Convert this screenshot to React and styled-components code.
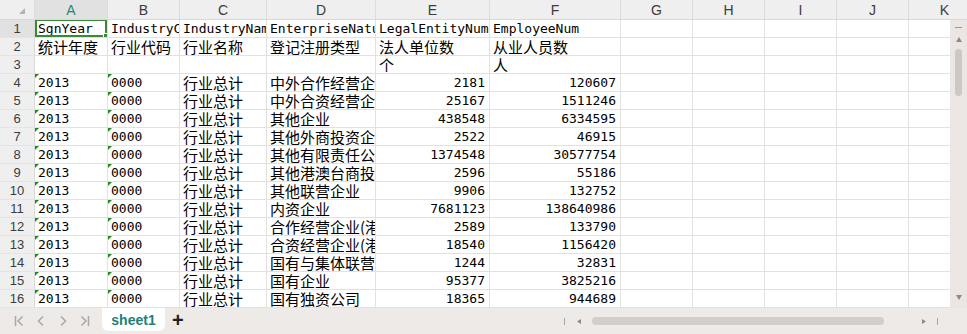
import styled, { createGlobalStyle } from "styled-components";

const COLS = [
    { key: "A", width: 73 },
    { key: "B", width: 72 },
    { key: "C", width: 87 },
    { key: "D", width: 109 },
    { key: "E", width: 114 },
    { key: "F", width: 131 },
    { key: "G", width: 72 },
    { key: "H", width: 72 },
    { key: "I", width: 72 },
    { key: "J", width: 72 },
    { key: "K", width: 72 },
];

const body = [
    ["中外合作经营企业", "2181", "120607"],
    ["中外合资经营企业", "25167", "1511246"],
    ["其他企业", "438548", "6334595"],
    ["其他外商投资企业", "2522", "46915"],
    ["其他有限责任公司", "1374548", "30577754"],
    ["其他港澳台商投资企业", "2596", "55186"],
    ["其他联营企业", "9906", "132752"],
    ["内资企业", "7681123", "138640986"],
    ["合作经营企业(港澳台)", "2589", "133790"],
    ["合资经营企业(港澳台)", "18540", "1156420"],
    ["国有与集体联营企业", "1244", "32831"],
    ["国有企业", "95377", "3825216"],
    ["国有独资公司", "18365", "944689"],
];

const rows = [
    ["SgnYear", "IndustryCode", "IndustryName", "EnterpriseNature", "LegalEntityNum", "EmployeeNum"],
    ["统计年度", "行业代码", "行业名称", "登记注册类型", "法人单位数", "从业人员数"],
    ["", "", "", "", "个", "人"],
    ...body.map(([type, legal, emp]) => ["2013", "0000", "行业总计", type, legal, emp]),
];

const isNumber = (v) => /^\d+$/.test(v);

export default function App() {
    return (
        <Page>
            <GlobalStyle />
            <HeaderRow>
                <Corner><CornerMark /></Corner>
                {COLS.map((c) => (
                    <ColHead key={c.key} $w={c.width} $active={c.key === "A"}>{c.key}</ColHead>
                ))}
            </HeaderRow>
            <Body>
                <Grid>
                    {rows.map((cells, r) => (
                        <Row key={r}>
                            <RowHead $active={r === 0}>{r + 1}</RowHead>
                            {COLS.map((c, i) => {
                                const v = cells[i] || "";
                                const flagged = r >= 3 && i < 2;
                                const right = r >= 3 && isNumber(v) && i >= 4;
                                return (
                                    <Cell
                                        key={c.key}
                                        $w={c.width}
                                        $mono={/^[\x00-\x7f]*$/.test(v)}
                                        $right={right}
                                        $flag={flagged}
                                    >
                                        {v}
                                        {r === 0 && i === 0 && <Selection><Handle /></Selection>}
                                    </Cell>
                                );
                            })}
                        </Row>
                    ))}
                </Grid>
                <VScroll>
                    <Dash />
                    <Arrow viewBox="0 0 6 5"><path d="M3 0 L6 5 L0 5 Z" /></Arrow>
                    <VThumb />
                    <Spacer />
                    <Arrow viewBox="0 0 6 5"><path d="M0 0 L6 0 L3 5 Z" /></Arrow>
                </VScroll>
            </Body>
            <Footer>
                <Nav>
                    <NavIcon viewBox="0 0 10 12"><path d="M1.5 1 V11 M8.5 1.5 L4 6 L8.5 10.5" /></NavIcon>
                    <NavIcon viewBox="0 0 10 12"><path d="M7 1.5 L2.5 6 L7 10.5" /></NavIcon>
                    <NavIcon viewBox="0 0 10 12"><path d="M3 1.5 L7.5 6 L3 10.5" /></NavIcon>
                    <NavIcon viewBox="0 0 10 12"><path d="M1.5 1.5 L6 6 L1.5 10.5 M8.5 1 V11" /></NavIcon>
                </Nav>
                <SheetTab>sheet1</SheetTab>
                <AddSheet>+</AddSheet>
                <HScroll>
                    <Tick />
                    <SmallArrow viewBox="0 0 5 6"><path d="M0 3 L5 0 L5 6 Z" /></SmallArrow>
                    <HThumb />
                    <SmallArrow viewBox="0 0 5 6"><path d="M5 3 L0 0 L0 6 Z" /></SmallArrow>
                    <Tick />
                </HScroll>
            </Footer>
        </Page>
    );
}

const GlobalStyle = createGlobalStyle`
    body {
        margin: 0;
        overflow: hidden;
        background: #fff;
    }
    * {
        box-sizing: border-box;
    }
`;

const Page = styled.div`
    width: 967px;
    height: 334px;
    display: flex;
    flex-direction: column;
    overflow: hidden;
    font-family: "Liberation Sans", Arial, sans-serif;
`;

const HeaderRow = styled.div`
    display: flex;
    height: 20px;
    background: #efefef;
    border-bottom: 1px solid #d9d9d9;
    flex-shrink: 0;
`;

const Corner = styled.div`
    width: 35px;
    flex-shrink: 0;
    position: relative;
    border-right: 1px solid #dcdcdc;
`;

const CornerMark = styled.div`
    position: absolute;
    right: 9px;
    bottom: 5px;
    width: 0;
    height: 0;
    border-left: 6px solid transparent;
    border-bottom: 6px solid #b4b4b4;
`;

const ColHead = styled.div`
    width: ${({ $w }) => $w}px;
    flex-shrink: 0;
    display: flex;
    align-items: center;
    justify-content: center;
    font-size: 14px;
    color: ${({ $active }) => ($active ? "#1d8a78" : "#3c3c3c")};
    background: ${({ $active }) => ($active ? "#e1e1e1" : "transparent")};
    border-right: 1px solid #dcdcdc;
`;

const Body = styled.div`
    flex: 1;
    display: flex;
    min-height: 0;
`;

const Grid = styled.div`
    flex: 1;
    overflow: hidden;
    display: flex;
    flex-direction: column;
`;

const Row = styled.div`
    display: flex;
    height: 18px;
    flex-shrink: 0;
`;

const RowHead = styled.div`
    width: 35px;
    flex-shrink: 0;
    display: flex;
    align-items: center;
    justify-content: center;
    font-size: 13px;
    color: #3c3c3c;
    background: ${({ $active }) => ($active ? "#e1e1e1" : "#efefef")};
    border-right: 1px solid #d9d9d9;
    border-bottom: 1px solid #e4e4e4;
`;

const Cell = styled.div`
    position: relative;
    width: ${({ $w }) => $w}px;
    flex-shrink: 0;
    padding: ${({ $mono }) => ($mono ? "0" : "1px")} ${({ $right }) => ($right ? "4px" : "0")} 0
        ${({ $right }) => ($right ? "0" : "3px")};
    display: flex;
    align-items: ${({ $mono }) => ($mono ? "flex-end" : "flex-start")};
    justify-content: ${({ $right }) => ($right ? "flex-end" : "flex-start")};
    white-space: nowrap;
    overflow: hidden;
    border-right: 1px solid #e1e1e1;
    border-bottom: 1px solid #e1e1e1;
    color: #000;
    font-family: ${({ $mono }) =>
        $mono ? `"DejaVu Sans Mono", "Liberation Mono", monospace` : `"Noto Sans CJK SC", sans-serif`};
    font-size: ${({ $mono }) => ($mono ? "13px" : "15px")};
    line-height: ${({ $mono }) => ($mono ? "16px" : "15px")};

    &::before {
        content: "";
        display: ${({ $flag }) => ($flag ? "block" : "none")};
        position: absolute;
        left: 0;
        top: 0;
        border-top: 4px solid #1c8c1c;
        border-right: 4px solid transparent;
    }
`;

const Selection = styled.div`
    position: absolute;
    inset: -1px 0 0 0;
    border: 2px solid #3a8a35;
    pointer-events: none;
`;

const Handle = styled.div`
    position: absolute;
    right: -4px;
    bottom: -4px;
    width: 6px;
    height: 6px;
    background: #3a8a35;
    border: 1px solid #fff;
`;

const VScroll = styled.div`
    width: 17px;
    flex-shrink: 0;
    background: #ebe6e4;
    display: flex;
    flex-direction: column;
    align-items: center;
    padding: 7px 0 8px;
`;

const Dash = styled.div`
    width: 7px;
    height: 1px;
    background: #9a9a9a;
`;

const Arrow = styled.svg`
    width: 6px;
    height: 5px;
    margin-top: 9px;
    fill: #8a8a8a;
`;

const VThumb = styled.div`
    width: 7px;
    height: 47px;
    margin-top: 7px;
    border-radius: 4px;
    background: #ccc8c6;
`;

const Spacer = styled.div`
    flex: 1;
`;

const Footer = styled.div`
    height: 26px;
    flex-shrink: 0;
    display: flex;
    align-items: flex-start;
    background: #eeeae8;
`;

const Nav = styled.div`
    display: flex;
    align-items: center;
    gap: 12px;
    padding: 7px 0 0 14px;
    width: 102px;
`;

const NavIcon = styled.svg`
    width: 10px;
    height: 12px;
    fill: none;
    stroke: #a8a8a8;
    stroke-width: 1.5;
`;

const SheetTab = styled.div`
    width: 63px;
    height: 23px;
    background: #fff;
    border-radius: 0 0 6px 6px;
    display: flex;
    align-items: center;
    justify-content: center;
    font-size: 14px;
    font-weight: 700;
    color: #1d8079;
`;

const AddSheet = styled.div`
    margin: 1px 0 0 7px;
    font-size: 20px;
    font-weight: 700;
    line-height: 22px;
    color: #222;
`;

const HScroll = styled.div`
    margin-left: auto;
    width: 403px;
    height: 26px;
    display: flex;
    align-items: center;
    padding-right: 19px;
`;

const Tick = styled.div`
    width: 1px;
    height: 7px;
    background: #a8a8a8;
`;

const SmallArrow = styled.svg`
    width: 4px;
    height: 5px;
    margin: 0 11px 0 12px;
    fill: #8a8a8a;
`;

const HThumb = styled.div`
    width: 292px;
    height: 8px;
    border-radius: 4px;
    background: #d2cecc;
    margin-right: 26px;
`;
